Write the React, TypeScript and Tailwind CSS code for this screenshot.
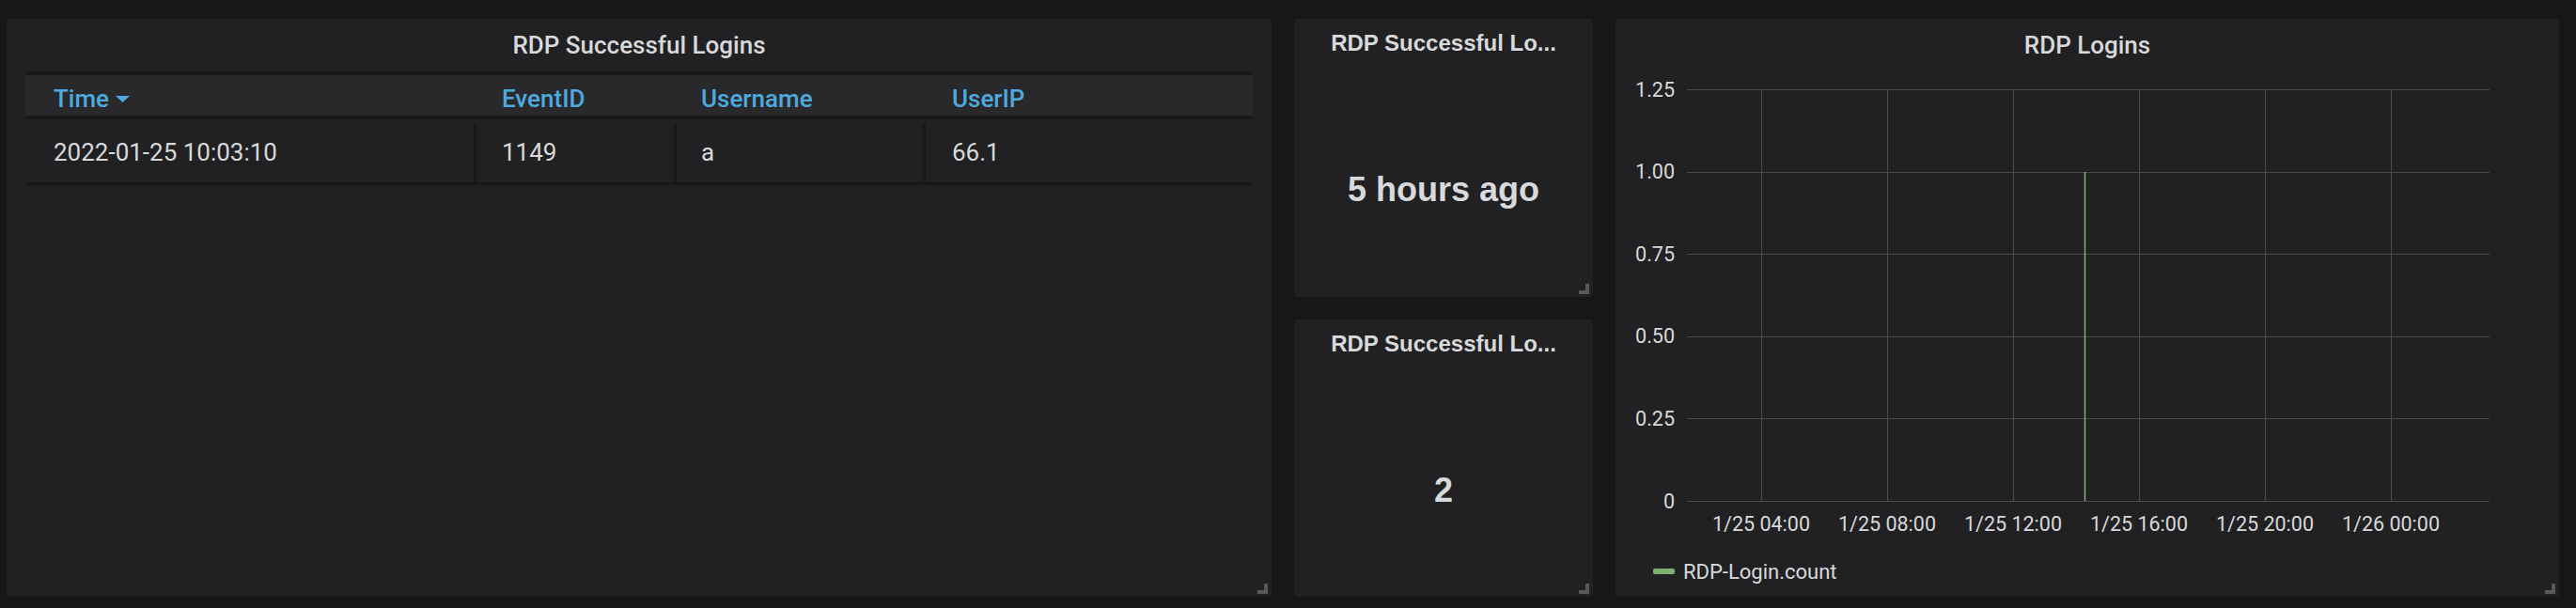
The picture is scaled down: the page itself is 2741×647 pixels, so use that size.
import React from "react";

function Handle() {
  return (
    <div className="absolute right-[4px] bottom-[3px] w-[11px] h-[11px] border-r-4 border-b-4 border-[#58585b]" />
  );
}

function TablePanel() {
  return (
    <div className="relative w-[1346px] h-[615px] bg-[#212124] rounded-[3px]">
      <div className="h-[56px] flex items-center justify-center text-[26px] font-medium text-[#d8d9da]">
        RDP Successful Logins
      </div>
      <div className="mx-[20px]">
        <div className="flex items-center h-[51px] pt-[7px] bg-[#29292c] border-y-4 border-[#18181a] text-[#4da9de] font-medium text-[26px]">
          <div className="w-[480px] pl-[30px] flex items-center gap-[7px]">
            <span>Time</span>
            <svg width="15" height="7" viewBox="0 0 15 7" className="mt-[1px]">
              <path d="M0 0 L15 0 L7.5 7 Z" fill="#4da9de" />
            </svg>
          </div>
          <div className="w-[213px] pl-[27px]">EventID</div>
          <div className="w-[265px] pl-[26px]">Username</div>
          <div className="flex-1 pl-[28px]">UserIP</div>
        </div>
        <div className="flex h-[70px] border-b-[3px] border-[#18181a] text-[26px] text-[#d8d9da]">
          <div className="w-[477px] pl-[30px] pt-[4px] flex items-center">2022-01-25 10:03:10</div>
          <div className="w-[3px] mt-[4px] bg-[#18181a]" />
          <div className="w-[210px] pl-[27px] pt-[4px] flex items-center">1149</div>
          <div className="w-[3px] mt-[4px] bg-[#18181a]" />
          <div className="w-[262px] pl-[26px] pt-[4px] flex items-center">a</div>
          <div className="w-[3px] mt-[4px] bg-[#18181a]" />
          <div className="flex-1 pl-[28px] pt-[4px] flex items-center">66.1</div>
        </div>
      </div>
      <Handle />
    </div>
  );
}

function StatPanel({ h, value }: { h: string; value: string }) {
  return (
    <div
      className={`relative ${h} bg-[#212124] rounded-[3px] flex flex-col font-['Liberation_Sans',Arial,sans-serif] font-bold text-[#d8d9da]`}
    >
      <div className="h-[52px] flex items-center justify-center text-[24px]">RDP Successful Lo...</div>
      <div className="flex-1 flex items-center justify-center pt-[16px] text-[36px]">{value}</div>
      <Handle />
    </div>
  );
}

function ChartPanel() {
  const ys = [19, 106.6, 194.2, 281.8, 369.4, 457];
  const yl = ["1.25", "1.00", "0.75", "0.50", "0.25", "0"];
  const xs = [155, 289, 423, 557, 691, 825];
  const xl = ["1/25 04:00", "1/25 08:00", "1/25 12:00", "1/25 16:00", "1/25 20:00", "1/26 00:00"];
  return (
    <div className="relative w-[1004px] h-[615px] bg-[#212124] rounded-[3px] flex flex-col text-[#d8d9da]">
      <div className="h-[56px] flex items-center justify-center text-[26px] font-medium">RDP Logins</div>
      <svg width="1004" height="510" viewBox="0 0 1004 510" className="block">
        {ys.map((y) => (
          <line key={"h" + y} x1="76" x2="930" y1={Math.round(y) + 0.5} y2={Math.round(y) + 0.5} stroke="#4a4a4d" strokeWidth="1.2" />
        ))}
        {xs.map((x) => (
          <line key={"v" + x} x1={x + 0.5} x2={x + 0.5} y1="19" y2="457.5" stroke="#4a4a4d" strokeWidth="1.2" />
        ))}
        <line x1="499.5" x2="499.5" y1="107" y2="457" stroke="#7eb26d" strokeWidth="1.5" />
        {ys.map((y, i) => (
          <text key={"yl" + i} x="63" y={y + 7.5} textAnchor="end" fontSize="21.5" fill="#d8d9da" fontFamily="Roboto, sans-serif">
            {yl[i]}
          </text>
        ))}
        {xs.map((x, i) => (
          <text key={"xl" + i} x={x} y="489" textAnchor="middle" fontSize="21.5" fill="#d8d9da" fontFamily="Roboto, sans-serif">
            {xl[i]}
          </text>
        ))}
      </svg>
      <div className="h-[44px] flex items-center pl-[40px] gap-[9px] text-[22px]">
        <div className="w-[23px] h-[6px] rounded-[2px] bg-[#7eb26d]" />
        <span>RDP-Login.count</span>
      </div>
      <Handle />
    </div>
  );
}

export default function App() {
  return (
    <div className="w-[2741px] h-[647px] bg-[#161719] flex gap-[24px] pt-[20px] pl-[7px] font-['Roboto',sans-serif]">
      <TablePanel />
      <div className="w-[318px] flex flex-col gap-[24px]">
        <StatPanel h="h-[296px]" value="5 hours ago" />
        <StatPanel h="h-[295px]" value="2" />
      </div>
      <ChartPanel />
    </div>
  );
}
